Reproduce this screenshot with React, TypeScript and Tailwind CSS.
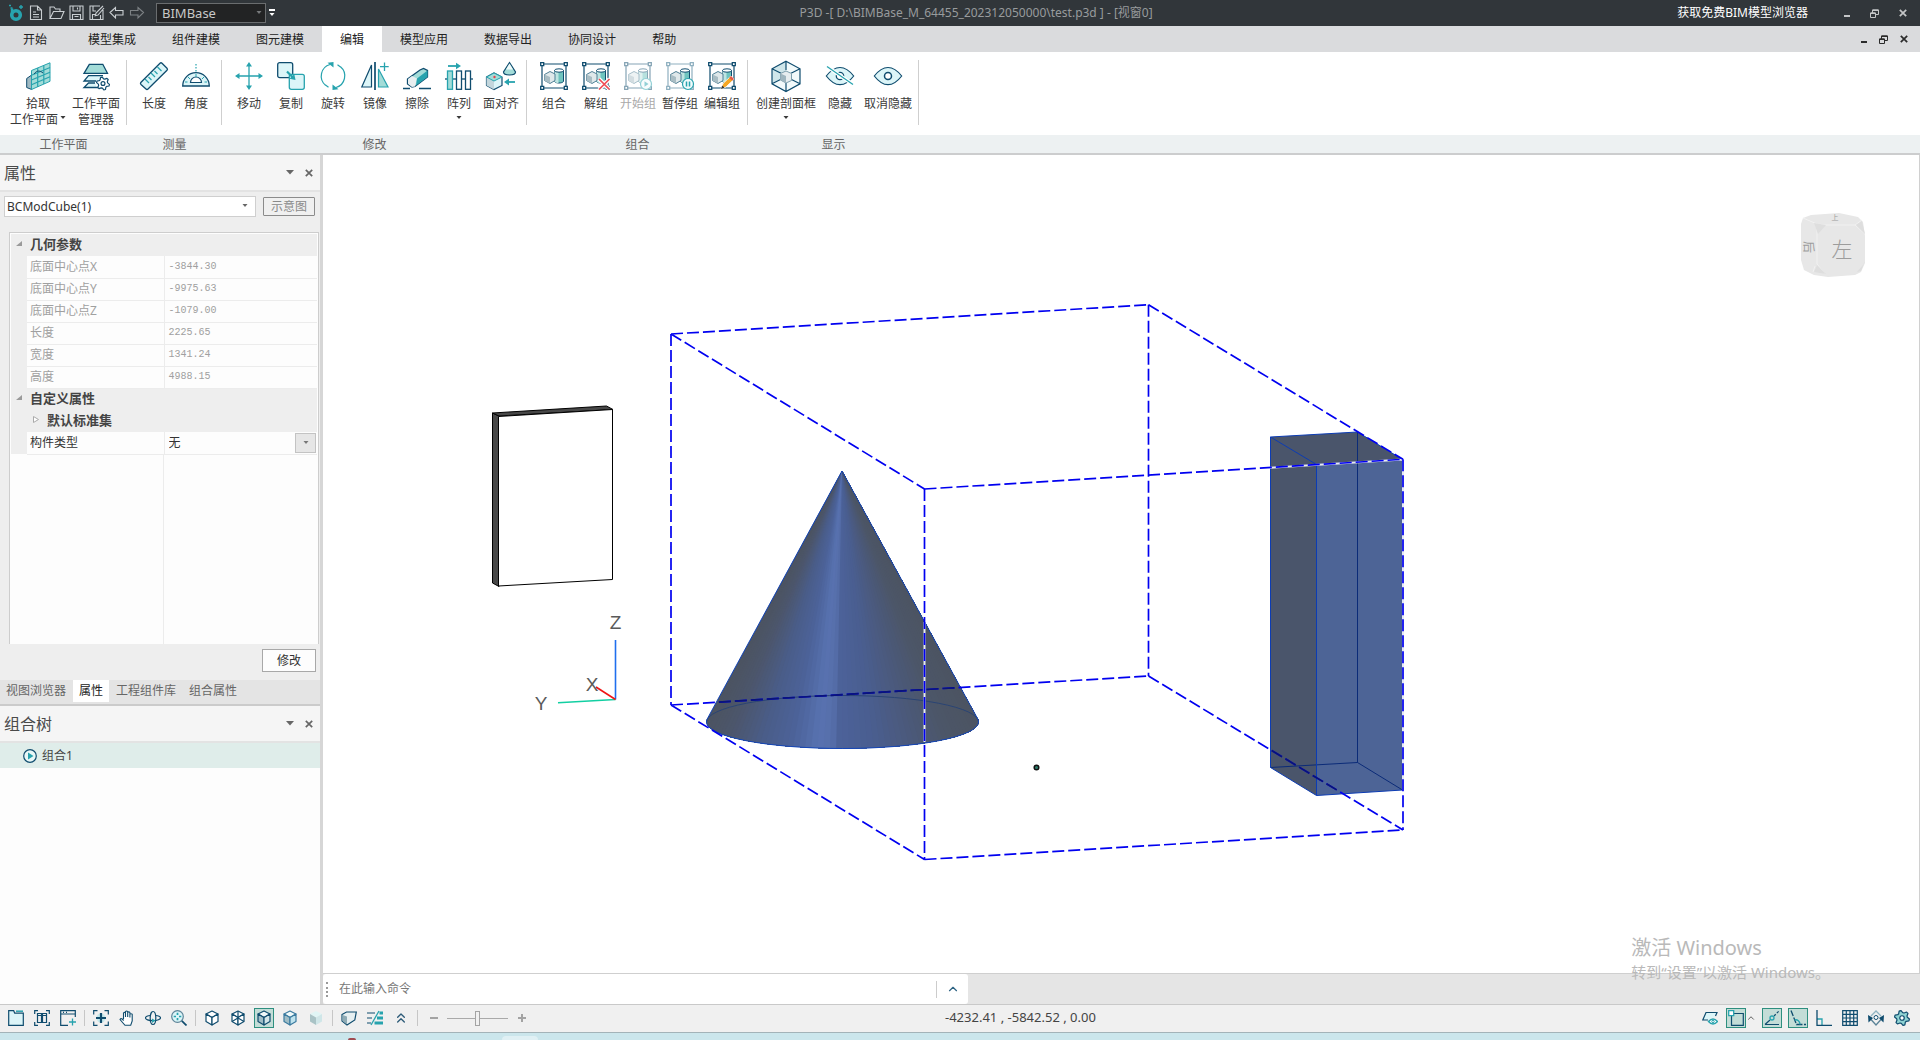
import type { ReactNode } from 'react';
import { LuChevronsUp, LuChevronUp } from 'react-icons/lu';

const NAVY = '#0f4c6e';
const TEAL = '#27a3ae';
const PALE = '#dcf5f8';
const MINT = '#a3dcd8';

/* ---------- shared bits ---------- */

function Caret({ className = '' }: { className?: string }) {
  return (
    <svg viewBox="0 0 6 4" className={`h-1 w-1.5 ${className}`} fill="currentColor">
      <path d="M0.5 0h5L3 3z" />
    </svg>
  );
}

function CloseGlyph() {
  return (
    <svg viewBox="0 0 8 8" className="size-2" stroke="currentColor" strokeWidth="1.7">
      <path d="M.8.8l6.4 6.4M7.2.8L.8 7.2" />
    </svg>
  );
}

function RestoreGlyph() {
  return (
    <svg viewBox="0 0 9 9" className="size-[9px]" fill="none" stroke="currentColor">
      <path d="M.5 4h5v4.5h-5zM2.5 4V1h6v4.5h-3" />
      <path d="M.5 4.3h5M2.5 1.3h6" strokeWidth="1.6" />
    </svg>
  );
}

function WindowButtons({ className, gap }: { className: string; gap: string }) {
  return (
    <div className={`flex items-center ${gap} ${className}`}>
      <button aria-label="最小化" className="flex h-3 w-1.5 items-end pb-0.5">
        <span className="h-0.5 w-full bg-current" />
      </button>
      <button aria-label="还原"><RestoreGlyph /></button>
      <button aria-label="关闭"><CloseGlyph /></button>
    </div>
  );
}

/* ---------- title bar ---------- */

const quickIcons: { name: string; dim?: boolean; d: string }[] = [
  { name: '新建', d: 'M1.5 1h7l4 4v9.5h-11zM8.5 1v4h4M4 7h3M4 9.5h6M4 12h6' },
  { name: '打开', d: 'M1 13.5V2h4l1.5 2H11v2.5M1 13.5l3.5-7H15l-3 7z' },
  { name: '保存', d: 'M1 1h13v13.5H1zM4 1v5h7V1M8.5 2.5v2M3.5 14.5v-5h8v5M5.5 11.5h4' },
  { name: '另存为', d: 'M11 1H1v13.5h13V5M4 1v5h3M3.5 14.5v-5h3M11.5 14.5V10M14 1L7 8l-.8 2.8L9 10l6-7' },
  { name: '撤销', d: 'M1 7.5L6.5 2.5V5.5H14v4.5H6.5v3z' },
  { name: '重做', dim: true, d: 'M14.5 7.5L9 2.5V5.5H1.5v4.5H9v3z' },
];

function TitleBar() {
  return (
    <header className="flex h-[26px] shrink-0 items-center bg-[#31363a] text-xs text-white">
      <svg viewBox="0 0 16 18" className="ml-2 h-[18px] w-4">
        <circle cx="8" cy="11" r="4.3" fill="none" stroke={TEAL} strokeWidth="3.6" />
        <path d="M4 8V4.5" stroke={TEAL} strokeWidth="2.5" />
        <path d="M1 1.5h2M2.5 4h2M13 1v4M11 3h4" stroke={TEAL} strokeWidth="1.4" />
      </svg>
      <div className="ml-[3px] flex">
        {quickIcons.map((q) => (
          <button key={q.name} aria-label={q.name} className="flex w-5 justify-center">
            <svg viewBox="0 0 16 16" className="size-4" fill="none" stroke={q.dim ? '#7d8285' : '#c9ced1'} strokeWidth="1.1">
              <path d={q.d} />
            </svg>
          </button>
        ))}
      </div>
      <div className="relative ml-[9px]">
        <select aria-label="产品" className="h-5 w-[110px] appearance-none border border-[#6a6d6f] bg-[#222324] pl-[5px] text-[13px] leading-4 text-[#c8c8c8]">
          <option>BIMBase</option>
        </select>
        <Caret className="pointer-events-none absolute top-2 right-1 text-[#77797b]" />
      </div>
      <button aria-label="自定义" className="ml-[3px] flex flex-col items-center gap-0.5">
        <span className="h-0.5 w-1.5 bg-white" />
        <Caret />
      </button>
      <h1 className="min-w-0 flex-1 truncate text-center text-[#989b9d]">
        P3D -[ D:\BIMBase_M_64455_202312050000\test.p3d ] - [视窗0]
      </h1>
      <a href="#viewer" className="mr-9">获取免费BIM模型浏览器</a>
      <WindowButtons className="mr-[13px] text-[#c4c6c7]" gap="gap-5" />
    </header>
  );
}

/* ---------- menu ---------- */

const menus = ['模型集成', '组件建模', '图元建模', '编辑', '模型应用', '数据导出', '协同设计', '帮助'];

function MenuBar() {
  return (
    <nav className="flex h-[26px] shrink-0 items-stretch bg-[#dadbdd] text-xs text-[#222]">
      <button className="px-[23px] pt-0.5">开始</button>
      {menus.map((m) => (
        <button key={m} className={`px-[18px] pt-0.5 ${m === '编辑' ? 'bg-white' : ''}`}>{m}</button>
      ))}
      <WindowButtons className="mr-3 ml-auto text-[#2b2b2b]" gap="gap-3" />
    </nav>
  );
}

/* ---------- ribbon icons, all on a 28 grid ---------- */

function Solids() {
  return (
    <g strokeWidth="1">
      <path d="M14.5 8.5v11c1.500 2 7.500 2 9 0v-11z" fill="#6fc4bf" stroke={NAVY} />
      <path d="M14.5 8.5v11c1 1.200 2.500 1.500 4 1.500V8z" fill="#bfe5e2" />
      <ellipse cx="19" cy="8.5" rx="4.5" ry="1.7" fill="#fff" stroke={NAVY} />
      <path d="M4.5 12.5L10 9.5l5 2.500v6.500l-5 3-5.500-3z" fill="#dfe8ea" stroke="#4f7f95" />
      <path d="M4.5 12.5l5.500 2.500v6.500l-5.500-3z" fill="#a9bdc4" />
    </g>
  );
}

function Frame({ faded, children }: { faded?: boolean; children?: ReactNode }) {
  const color = faded ? '#8fb0c0' : NAVY;
  return (
    <>
      <path d="M4 2h20M4 26h20M2 4v20M26 4v20" stroke={color} strokeWidth="1.2" />
      <Solids />
      <path d="M.7.7h3v3h-3zM24.3.7h3v3h-3zM.7 24.3h3v3h-3zM24.3 24.3h3v3h-3z" fill="#fff" stroke={color} strokeWidth="1.3" />
      {children}
    </>
  );
}

function Gear({ cx, cy, r, fill }: { cx: number; cy: number; r: number; fill: string }) {
  const pts = Array.from({ length: 24 }, (_, i) => {
    const a = (i / 24) * Math.PI * 2 + Math.PI / 24;
    const rad = i % 4 < 2 ? r : r * 0.72;
    return `${cx + rad * Math.cos(a)},${cy + rad * Math.sin(a)}`;
  }).join(' ');
  return (
    <g fill={fill} stroke={NAVY} strokeWidth="1.2" strokeLinejoin="round">
      <polygon points={pts} />
      <circle cx={cx} cy={cy} r={r * 0.3} fill="#fff" />
    </g>
  );
}

const icons: Record<string, ReactNode> = {
  pick: (
    <>
      <path d="M2.7 16.5l5-3.5v14.5l-5-2z" fill="#9fb9c2" stroke={NAVY} />
      <path d="M7.5 8.5L26 .8v18.500L7.500 27.500z" fill={MINT} stroke={TEAL} />
      <path d="M13.7 6v19M19.8 3.5v18.500M7.500 13.200L26 5.500M7.500 18L26 10.200M7.500 22.700L26 14.800" stroke={TEAL} strokeWidth="1.2" />
      <path d="M10 12c3-4 6-3.500 9-1" stroke={NAVY} />
    </>
  ),
  planes: (
    <>
      <path d="M7.3 2.3h13.500l4.700 9H2z" fill={MINT} stroke={NAVY} strokeWidth="1.3" />
      <path d="M6 14h15l2 3H17l-3 2.500H2zM6 21.500h8v4H2z" fill={PALE} />
      <path d="M21 13.700H6.500L2 19h12M13 21H6.500L2 25.500h14" stroke={NAVY} strokeWidth="1.3" />
      <Gear cx={21} cy={21.5} r={6.5} fill="#fff" />
    </>
  ),
  length: (
    <>
      <path d="M.8 20.500L20 1.200q1-1 2 0l5 5q1 1 0 2L8 27q-1 1-2 0l-5-4.500q-1-1-.2-2z" fill={PALE} stroke={NAVY} strokeWidth="1.3" />
      <path d="M5 17l4 4M8.500 15l3 3M11 11l4 4M14.500 9l3 3M17.500 5l4 4" stroke={TEAL} strokeWidth="1.2" />
    </>
  ),
  angle: (
    <>
      <path d="M.7 24a13.300 13.300 0 0 1 26.600 0z" fill={PALE} stroke={NAVY} strokeWidth="1.3" />
      <path d="M8.500 20.500a5.500 5.500 0 0 1 11 0z" fill="#fff" stroke={NAVY} strokeWidth="1.2" />
      <path d="M14 2v9" stroke={TEAL} strokeWidth="1.2" strokeDasharray="1.5 1.5" />
      <path d="M14 12v3M6 15l2 2M22 15l-2 2M3 20h2.500M22.500 20H25" stroke={TEAL} />
    </>
  ),
  move: (
    <>
      <path d="M14 3v22M3 14h22" stroke={TEAL} strokeWidth="1.3" />
      <path d="M14 0l3 4.500h-6zM14 28l3-4.500h-6zM0 14l4.500-3v6zM28 14l-4.500-3v6z" fill={TEAL} />
    </>
  ),
  copy: (
    <>
      <rect x=".7" y=".7" width="15" height="15" rx="2" fill={PALE} stroke={NAVY} strokeWidth="1.3" />
      <rect x="12.3" y="12.3" width="15" height="15" rx="2" fill={PALE} stroke={TEAL} strokeWidth="1.3" />
      <path d="M10 9.500l6 6" stroke={TEAL} strokeWidth="2.2" />
      <path d="M18.500 18l-6-1.200 4.800-4.800z" fill={TEAL} />
    </>
  ),
  rotate: (
    <>
      <path d="M11 2.500a12 12 0 0 0-4.500 20.700M17 25.500a12 12 0 0 0 4.500-20.700M6.500 23l3 2.200M21.500 5l-3-2.200" stroke={TEAL} strokeWidth="1.2" />
      <path d="M8.500.8l6-.8v5.500zM19.500 27.200l-6 .8v-5.500z" fill={TEAL} />
    </>
  ),
  mirror: (
    <>
      <path d="M10.500 3v22H.8z" fill={PALE} stroke={NAVY} strokeWidth="1.2" />
      <path d="M17.500 7v18H27z" fill={MINT} stroke={TEAL} strokeWidth="1.2" />
      <path d="M14 0v28" stroke={NAVY} strokeWidth="1.7" />
      <path d="M23.500.5v8.500M19 4.700h8.700" stroke={TEAL} strokeWidth="1.3" />
    </>
  ),
  erase: (
    <>
      <path d="M4.500 17L17 8l3.500-1.500 4 2v6.500L12 24.500l-3 .5-4.500-3z" fill={MINT} stroke={NAVY} strokeWidth="1.3" />
      <path d="M5 17l4-3 5 2.500-2 8-3 .5-4-3.200z" fill="#e8eef0" />
      <path d="M14 16.500l10.500-8v6.500L13 23.500z" fill={TEAL} />
      <path d="M0 26.500h7M16 26.500h12" stroke={NAVY} strokeWidth="1.3" />
    </>
  ),
  array: (
    <>
      <path d="M3 4h10" stroke={TEAL} strokeWidth="1.8" />
      <path d="M16 4l-5-3.300v6.600z" fill={TEAL} />
      <path d="M0 17h28" stroke={NAVY} strokeWidth="1.3" />
      <rect x="2.5" y="9" width="5" height="18.3" fill={MINT} stroke={TEAL} strokeWidth="1.3" />
      <rect x="11.5" y="9" width="5" height="18.3" fill="#fff" stroke={NAVY} strokeWidth="1.3" />
      <rect x="20.5" y="9" width="5" height="18.3" fill="#fff" stroke={NAVY} strokeWidth="1.3" />
    </>
  ),
  align: (
    <>
      <path d="M-.5 15l7.500-4 8 4v8.500l-8 4-7.500-4z" fill={PALE} stroke={NAVY} strokeWidth="1.2" />
      <path d="M-.5 15l7.500 4v8.500l-7.500-4z" fill="#c3d6dc" />
      <path d="M-.5 15l7.500-4 8 4-8 4z" fill={MINT} stroke={TEAL} />
      <path d="M22.500.5l6 9.500c0 4-12 4-12 0z" fill={MINT} stroke={NAVY} strokeWidth="1.2" />
      <path d="M22.500 1.500l3.500 6h-7z" fill="#f0fbfb" />
      <circle cx="7.5" cy="15" r="1.2" fill="#e8404a" />
      <path d="M28 20h-8" stroke={TEAL} strokeWidth="1.8" />
      <path d="M17 20l5-3.500v7z" fill={TEAL} />
    </>
  ),
  group: <Frame />,
  ungroup: (
    <Frame>
      <path d="M17 17l10.500 10.500M27.500 17L17 27.500" stroke="#fff" strokeWidth="4" />
      <path d="M17 17l10.500 10.500M27.500 17L17 27.500" stroke="#ee4d55" strokeWidth="1.7" />
    </Frame>
  ),
  start: (
    <Frame>
      <circle cx="22" cy="22" r="5.5" fill="#f2fbfc" stroke={TEAL} strokeWidth="1.2" />
      <path d="M20.500 19.300v5.400l4-2.700z" fill={TEAL} />
    </Frame>
  ),
  pause: (
    <Frame faded>
      <circle cx="22" cy="22" r="5.5" fill="#f2fbfc" stroke={TEAL} strokeWidth="1.2" />
      <path d="M20.500 19.500v5M23.500 19.500v5" stroke={TEAL} strokeWidth="1.5" />
    </Frame>
  ),
  edit: (
    <Frame>
      <path d="M13 27l2-5.500L23 14l3 3-8 8z" fill="#f6a723" stroke="#fff" strokeWidth=".8" />
      <path d="M23 14l3 3-1.800 1.800-3-3z" fill="#e35a4a" />
      <path d="M13 27l1.200-3.500 2.300 2.300z" fill="#333" />
    </Frame>
  ),
  section: (
    <>
      <path d="M14-.7l14 7.500v15L14 29.500 0 21.800v-15z" fill="#f2fafb" />
      <path d="M14-.7v14L0 21.800v-15z" fill="#cfe6ea" />
      <path d="M14-.7l14 7.500v15L14 29.500 0 21.800v-15zM14 0v8M0 6.800l9 4.500M28 6.800l-9 4.500M0 21.800l9-4.500M28 21.800l-9-4.500M14 29v-8" stroke={NAVY} strokeWidth="1.2" />
      <path d="M8.500 11.500L14 9l5.500 2.500v7L14 21l-5.500-3z" fill="#e6edef" stroke="#7e9fad" />
      <path d="M8.500 11.500L14 14v7l-5.500-3z" fill="#9fb6bf" />
    </>
  ),
  hide: (
    <>
      <path d="M.3 14Q7 5.500 14 5.500T27.700 14Q21 22.700 14 22.700T.3 14z" fill={PALE} stroke={NAVY} strokeWidth="1.2" />
      <circle cx="14" cy="14" r="3.7" fill="#fff" stroke={NAVY} strokeWidth="1.3" />
      <path d="M1 4.500l26 18" stroke="#fff" strokeWidth="3.5" />
      <path d="M1 4.500l26 18" stroke={TEAL} strokeWidth="1.3" />
    </>
  ),
  show: (
    <>
      <path d="M.3 14Q7 5.500 14 5.500T27.700 14Q21 22.700 14 22.700T.3 14z" fill={PALE} stroke={NAVY} strokeWidth="1.2" />
      <circle cx="14" cy="14" r="3.5" fill="#fff" stroke={NAVY} strokeWidth="1.5" />
    </>
  ),
};

/* ---------- ribbon ---------- */

interface Tool {
  icon: string;
  label: string;
  second?: string;
  menu?: boolean;
  disabled?: boolean;
  width?: string;
}

const groups: { title: string; tools: Tool[] }[] = [
  {
    title: '工作平面',
    tools: [
      { icon: 'pick', label: '拾取', second: '工作平面', menu: true, width: 'w-16' },
      { icon: 'planes', label: '工作平面', second: '管理器', width: 'w-[52px]' },
    ],
  },
  {
    title: '测量',
    tools: [
      { icon: 'length', label: '长度' },
      { icon: 'angle', label: '角度' },
    ],
  },
  {
    title: '修改',
    tools: [
      { icon: 'move', label: '移动' },
      { icon: 'copy', label: '复制' },
      { icon: 'rotate', label: '旋转' },
      { icon: 'mirror', label: '镜像' },
      { icon: 'erase', label: '擦除' },
      { icon: 'array', label: '阵列', menu: true },
      { icon: 'align', label: '面对齐' },
    ],
  },
  {
    title: '组合',
    tools: [
      { icon: 'group', label: '组合' },
      { icon: 'ungroup', label: '解组' },
      { icon: 'start', label: '开始组', disabled: true },
      { icon: 'pause', label: '暂停组' },
      { icon: 'edit', label: '编辑组' },
    ],
  },
  {
    title: '显示',
    tools: [
      { icon: 'section', label: '创建剖面框', menu: true, width: 'w-16' },
      { icon: 'hide', label: '隐藏', width: 'w-11' },
      { icon: 'show', label: '取消隐藏', width: 'w-[52px]' },
    ],
  },
];

function ToolButton({ icon, label, second, menu, disabled, width = 'w-[42px]' }: Tool) {
  return (
    <button disabled={disabled} className={`flex flex-col items-center pt-2.5 whitespace-nowrap ${width} ${disabled ? 'text-[#a9a9a9]' : ''}`}>
      <svg viewBox="0 0 28 28" className={`size-7 overflow-visible ${disabled ? 'opacity-50' : ''}`} fill="none">
        {icons[icon]}
      </svg>
      <span className="mt-1.5 leading-4">{label}</span>
      {(second || menu) && (
        <span className="flex h-4 items-center gap-0.5 leading-4">
          {second}
          {menu && <Caret className="-mt-1" />}
        </span>
      )}
    </button>
  );
}

function Ribbon() {
  return (
    <div className="flex h-[103px] shrink-0 border-b-2 border-[#cccdce] bg-white text-xs text-[#3a3a3a]">
      {groups.map((g) => (
        <section key={g.title} aria-label={g.title} className="flex flex-col">
          <div className="flex flex-1">
            <div className="flex flex-1 items-start pr-1 pl-1.5">
              {g.tools.map((t) => <ToolButton key={t.icon} {...t} />)}
            </div>
            <div className="mt-2 mb-2.5 w-px bg-[#cfcfcf]" />
          </div>
          <div className="h-[18px] bg-[#edf1f2] text-center leading-5 text-[#666]">{g.title}</div>
        </section>
      ))}
      <div className="flex flex-1 items-end">
        <div className="h-[18px] flex-1 bg-[#edf1f2]" />
      </div>
    </div>
  );
}

/* ---------- left dock ---------- */

const geometry: [string, string][] = [
  ['底面中心点X', '-3844.30'],
  ['底面中心点Y', '-9975.63'],
  ['底面中心点Z', '-1079.00'],
  ['长度', '2225.65'],
  ['宽度', '1341.24'],
  ['高度', '4988.15'],
];

function PanelHeader({ title }: { title: string }) {
  return (
    <div className="flex h-[37px] shrink-0 items-center border-b-2 border-[#e3e3e3] bg-[#f5f5f5] pr-[7px] pl-1 text-[#4a4a4a]">
      <h2 className="flex-1 text-base">{title}</h2>
      <button aria-label="面板菜单" className="mr-[11px] text-[#666]">
        <svg viewBox="0 0 8 5" className="h-[5px] w-2" fill="currentColor"><path d="M0 0h8L4 4.5z" /></svg>
      </button>
      <button aria-label="关闭面板" className="text-[#666]"><CloseGlyph /></button>
    </div>
  );
}

function SectionRow({ title, nested }: { title: string; nested?: boolean }) {
  return (
    <tr className="h-[22px] bg-[#eeeeee]">
      <th colSpan={3} className="px-0 pt-0 pb-[3px] text-left text-[13px] font-bold text-[#444]">
        <span className={`flex items-center ${nested ? 'gap-2 pl-[22px]' : 'gap-2 pl-[5px]'}`}>
          <svg viewBox="0 0 6 7" className="h-[7px] w-1.5">
            {nested
              ? <path d="M.5.5v6l5-3z" fill="#fff" stroke="#aaa" />
              : <path d="M6 1v5H0z" fill="#9a9a9a" />}
          </svg>
          {title}
        </span>
      </th>
    </tr>
  );
}

function PropertyGrid() {
  return (
    <div className="mr-px ml-[9px] flex flex-1 flex-col border border-b-0 border-[#cdcdcd] bg-[#fdfdfd] p-px pb-0">
      <table className="w-full table-fixed border-collapse text-xs leading-4">
        <colgroup>
          <col className="w-4" />
          <col className="w-[137px]" />
          <col />
        </colgroup>
        <tbody>
          <SectionRow title="几何参数" />
          {geometry.map(([name, value]) => (
            <tr key={name} className="h-[22px] text-[#a0a0a0]">
              <td className="bg-[#eeeeee] p-0" />
              <td className="border-r border-b border-[#ececec] py-0 pr-0 pl-[3px]">{name}</td>
              <td className="border-b border-[#ececec] py-0 pr-0 pl-1 font-['Liberation_Mono',monospace] text-[10px]">{value}</td>
            </tr>
          ))}
          <SectionRow title="自定义属性" />
          <SectionRow title="默认标准集" nested />
          <tr className="h-[22px] text-[#333]">
            <td className="bg-[#eeeeee] p-0" />
            <td className="border-r border-b border-[#ececec] py-0 pr-0 pl-[3px]"><label htmlFor="kind">构件类型</label></td>
            <td className="border-b border-[#ececec] p-0">
              <div className="relative flex">
                <select id="kind" className="h-5 flex-1 appearance-none pl-1">
                  <option>无</option>
                </select>
                <span className="pointer-events-none absolute top-0 right-px flex h-5 w-[21px] items-center justify-center border border-[#c3c3c3] bg-[#e6e6e6] text-[#777]">
                  <Caret />
                </span>
              </div>
            </td>
          </tr>
        </tbody>
      </table>
      <div className="flex flex-1">
        <div className="w-[153px] border-r border-[#ececec]" />
      </div>
    </div>
  );
}

const dockTabs = ['视图浏览器', '属性', '工程组件库', '组合属性'];

function LeftDock() {
  return (
    <aside className="flex w-[323px] shrink-0 flex-col border-r-3 border-[#d6d6d6] bg-[#eeeeee] text-xs">
      <PanelHeader title="属性" />
      <div className="flex items-center gap-[7px] pt-1 pr-[5px] pl-1">
        <div className="relative flex-1">
          <select aria-label="对象" className="h-[21px] w-full appearance-none border border-[#cfcfcf] bg-white pl-0.5 text-xs text-[#333]">
            <option>BCModCube(1)</option>
          </select>
          <Caret className="pointer-events-none absolute top-2 right-2 text-[#666]" />
        </div>
        <button className="h-[19px] w-[52px] rounded-[1px] border border-[#8b8b8b] bg-[#f0f0f0] leading-4 text-[#8a8a8a]">示意图</button>
      </div>
      <div className="flex h-[427px] flex-col pt-[15px]">
        <PropertyGrid />
      </div>
      <div className="flex justify-end py-[5px] pr-1">
        <button className="h-[23px] w-[54px] border border-[#a8a8a8] bg-[#fdfdfd] text-[#333]">修改</button>
      </div>
      <div className="mt-[3px] flex h-[26px] shrink-0 items-start gap-px border-b-2 border-[#cbcbcb] bg-[#e4e4e4] text-[#666]">
        {dockTabs.map((t) => (
          <button key={t} className={`h-[22px] px-1.5 ${t === '属性' ? 'bg-white text-[#222]' : ''}`}>{t}</button>
        ))}
      </div>
      <PanelHeader title="组合树" />
      <div className="flex-1 bg-[#fdfdfd]">
        <button className="flex h-[25px] w-full items-center gap-[5px] bg-[#dfedea] pl-[23px] text-[#444]">
          <svg viewBox="0 0 14 14" className="size-3.5">
            <circle cx="7" cy="7" r="6.3" fill="#e8f7f7" stroke={NAVY} strokeWidth="1.2" />
            <path d="M5 3.500v7L10.500 7z" fill={TEAL} />
          </svg>
          组合1
        </button>
      </div>
    </aside>
  );
}

/* ---------- 3D viewport ---------- */

// shade of the cone side from left (0) to right (1)
const coneStops: [number, number[]][] = [
  [0, [76, 84, 98]],
  [0.08, [76, 86, 108]],
  [0.2, [74, 93, 138]],
  [0.3, [76, 98, 152]],
  [0.34, [80, 104, 162]],
  [0.4, [88, 114, 176]],
  [0.45, [86, 110, 170]],
  [0.47, [76, 98, 154]],
  [0.6, [74, 94, 144]],
  [0.75, [75, 89, 122]],
  [0.88, [76, 86, 104]],
  [1, [76, 84, 98]],
];

function shade(t: number) {
  const i = Math.max(1, coneStops.findIndex(([s]) => s >= t));
  const [t0, a] = coneStops[i - 1];
  const [t1, b] = coneStops[i];
  const k = (t - t0) / (t1 - t0);
  return `rgb(${a.map((v, n) => Math.round(v + (b[n] - v) * k)).join(',')})`;
}

function Cone() {
  const cx = 842.5, cy = 722, rx = 136, ry = 26.5;
  const n = 72;
  const start = Math.PI + 0.1;
  const sweep = Math.PI + 0.2;
  const rim = Array.from({ length: n + 1 }, (_, i) => {
    const a = start - (i / n) * sweep;
    return [cx + rx * Math.cos(a), cy + ry * Math.sin(a)];
  });
  return (
    <g>
      {/* every slice runs on to the right edge, the next one paints over it */}
      {rim.slice(0, n).map(([x], i) => (
        <polygon
          key={i}
          points={`842,471 ${rim.slice(i).map((p) => p.join(',')).join(' ')}`}
          fill={shade(Math.min(1, Math.max(0, (x - cx + rx) / (2 * rx))))}
        />
      ))}
      <path d="M706.5 722a136 26.5 0 0 1 272 0" stroke="#2a4474" />
      <path d="M842 471L707.200 719q-.9 1.500-.7 3a136 26.500 0 0 0 272 0q.2-1.500-.7-3z" stroke="#1446b8" />
    </g>
  );
}

function Viewport() {
  return (
    <svg viewBox="323 155 1596 818" className="absolute inset-0 h-full w-full" fill="none">
      {/* slab */}
      <g stroke="#000" strokeLinejoin="round">
        <path d="M492.500 413L499 416V586.500l-6.500-3.500z" fill="#484848" />
        <path d="M492.500 413L606.500 406l6.500 3.500-114 6.500z" fill="#484848" />
        <path d="M498.500 416.500L612.500 409.500V579.500L498.500 586z" fill="#fff" />
      </g>

      <Cone />

      {/* column */}
      <path d="M1270.500 437L1357.500 432 1402.500 459.500 1316.500 464.500V795.500L1270.500 767.500z" fill="#4a556b" />
      <path d="M1316.500 464.500L1402.500 459.500V790L1316.500 795.500z" fill="#4d6496" />
      <path d="M1357.500 432V762.500L1402.500 790M1357.500 762.500L1270.500 767.500" stroke="#0b2b78" />
      <path d="M1270.500 437L1357.500 432 1402.500 459.500V790L1316.500 795.500 1270.500 767.500zM1270.500 437L1316.500 464.500V795.500M1316.500 464.500L1402.500 459.500" stroke="#0c3cb4" />

      {/* selection box, pale underlay where it crosses in front of a solid */}
      <path d="M924.500 622V742M1270 467.700L1403 459.500M1403 459.500V790" stroke="#e6e9f5" strokeWidth="2" />
      <g stroke="#0000f0" strokeWidth="1.7" strokeDasharray="12 4">
        <path d="M671 334L1148.500 304.700M1148.500 304.700L1403 459.300M671 334L924.500 489M924.500 489L1403 459.300" />
        <path d="M671 334V705M1148.500 304.700V676M924.500 489V859.500M1403 459.300V830" />
        <path d="M671 705L1148.500 676M1148.500 676L1403 830M671 705L924.500 859.500M924.500 859.500L1403 830" />
      </g>
      {/* rear edges seen through the solids */}
      <g stroke="#0a1478" strokeWidth="1.700">
        <path d="M671 705L1148.500 676" strokeDasharray="0 48 12 4 12 4 12 4 12 4 12 4 12 4 12 4 12 4 12 4 12 4 12 4 12 4 12 4 12 4 12 600" />
        <path d="M1148.500 676L1403 830" strokeDasharray="0 144 12 4 12 4 12 4 12 4 12 600" />
      </g>

      {/* axes */}
      <g strokeWidth="1.6">
        <path d="M615.500 699.500V640" stroke="#1f6fee" />
        <path d="M615.500 699.500L558 702.700" stroke="#12cfa2" />
        <path d="M615.500 699.500L596 687" stroke="#f01414" />
      </g>
      <g fill="#5a5a5a" fontSize="19" textAnchor="middle" fontFamily="'Liberation Sans', sans-serif">
        <text x="615.5" y="629">Z</text>
        <text x="592" y="691">X</text>
        <text x="541" y="710">Y</text>
      </g>

      <circle cx="1036.5" cy="767.5" r="2.3" fill="#2d7a6a" stroke="#111" strokeWidth="1.5" />

      {/* view cube */}
      <path d="M1803 218l8-3 28-2 19 4 5 5 2 14v27l-4 9-6 3-27 2-14-2-10-5-3-10v-36z" fill="#e7e7e7" />
      <path d="M1803 218l14 6 9 1h29l7-5M1817 224v40l8 10M1855 225l10 9M1815 266l-2 6" stroke="#f1f1f1" />
      <path d="M1814 223l12 2-8 9zM1856 225l6-4 3 13zM1817 265l9 9-12-2zM1857 272l6-7 2-4-4 10z" fill="#dedede" />
      <g fill="#9c9c9c" fontFamily="'Noto Sans CJK SC', sans-serif" textAnchor="middle">
        <text x="1842" y="257" fontSize="21" fontWeight="300">左</text>
        <text transform="translate(1804 247) rotate(90)" fontSize="12">后</text>
        <text x="1835" y="220" fontSize="7">上</text>
      </g>
    </svg>
  );
}

function CommandLine() {
  return (
    <div className="flex h-[31px] shrink-0 border-t border-[#cfcfcf] bg-[#e5e5e5] text-xs">
      <div className="flex w-[645px] items-center rounded-[3px] bg-white">
        <span className="ml-[3px] h-[15px] border-l-2 border-dotted border-[#999]" />
        <input aria-label="命令" placeholder="在此输入命令" className="ml-[11px] min-w-0 flex-1 outline-none placeholder:text-[#777]" />
        <span className="h-[17px] w-px bg-[#ccc]" />
        <button aria-label="展开" className="flex w-[31px] justify-center text-[#2d6383]">
          <LuChevronUp className="size-3.5" />
        </button>
      </div>
    </div>
  );
}

/* ---------- status bar ---------- */

function StatusCube({ line, faces, wire }: { line: string; faces?: [string, string, string]; wire?: boolean }) {
  return (
    <g stroke={line} strokeWidth="1.2" strokeLinejoin="round">
      <path d="M8 1l6 3-6 3.500L2 4z" fill={faces ? faces[0] : '#fff'} />
      <path d="M2 4l6 3.500V15l-6-3.500z" fill={faces ? faces[1] : '#fff'} />
      <path d="M14 4L8 7.500V15l6-3.500z" fill={faces ? faces[2] : '#fff'} />
      {wire && <path d="M8 1v7.500M2 11.500l6-3.500 6 3.500" />}
    </g>
  );
}

interface StatusTool {
  name: string;
  active?: boolean;
  icon: ReactNode;
}

const leftTools: StatusTool[][] = [
  [
    {
      name: '视图',
      icon: (
        <>
          <path d="M.7 15.300V.7h5l1 2.500h8.600v12.100z" fill={PALE} stroke={NAVY} strokeWidth="1.2" />
          <path d="M8 1.200h7" stroke={TEAL} strokeWidth="1.5" />
        </>
      ),
    },
    {
      name: '平铺',
      icon: (
        <>
          <path d="M3.500 3.500h4v9h-4zM8.500 3.500h4v9h-4zM3.500 5.500h9" stroke={NAVY} strokeWidth="1.2" />
          <path d="M.7 4V.7H4M12 .7h3.300V4M.7 12v3.300H4M12 15.300h3.300V12" stroke={NAVY} strokeWidth="1.2" />
        </>
      ),
    },
    {
      name: '新窗口',
      icon: (
        <>
          <path d="M15.300 7V.7H.7v14.600H8M.7 4h14.600M3 2.400h1M6 2.400h1" stroke={NAVY} strokeWidth="1.2" />
          <path d="M12.500 8.500v7M9 12h7" stroke={TEAL} strokeWidth="1.3" />
        </>
      ),
    },
  ],
  [
    {
      name: '全图',
      icon: (
        <>
          <path d="M.7 4.500V.7h3.800M11.500.7h3.800v3.800M.7 11.500v3.800h3.800M11.500 15.300h3.800v-3.800" stroke={NAVY} strokeWidth="1.2" />
          <circle cx="8" cy="8" r="4.5" fill="#c6e9ec" />
          <path d="M8 3v10M3 8h10" stroke={NAVY} strokeWidth="2.2" />
        </>
      ),
    },
    {
      name: '平移',
      icon: <path d="M4.500 9V3q1-1.300 2 0V7 1.700q1.100-1.300 2.200 0V7 2.500q1.100-1.200 2.200 0V7.500 4.200q1.100-1 2.300 0V11l-1.500 4.300H6L1 9.500q.8-1.500 2.200-.5l1.500 1.500" fill="#fff" stroke={NAVY} strokeWidth="1.1" />,
    },
    {
      name: '动态观察',
      icon: (
        <>
          <ellipse cx="8" cy="8" rx="2.8" ry="6.5" stroke={NAVY} strokeWidth="1.2" />
          <path d="M10.500 5.500c3 .3 5 1.300 5 2.500s-3 2.700-7.500 2.700S.5 9.300.5 8s2-2.200 5-2.500" stroke={NAVY} strokeWidth="1.2" />
          <path d="M7 8.500l3.500 2-3.500 2.500z" fill={TEAL} />
        </>
      ),
    },
    {
      name: '缩放',
      icon: (
        <>
          <circle cx="6.5" cy="6.5" r="5.8" fill={PALE} stroke="#5d8599" strokeWidth="1.2" />
          <path d="M6.500 2.700v2.300M6.500 8v2.300M2.700 6.500H5M8 6.500h2.300" stroke={TEAL} strokeWidth="1.7" />
          <path d="M10.800 10.800l4.700 4.700" stroke={NAVY} strokeWidth="1.7" />
        </>
      ),
    },
  ],
  [
    { name: '线框', icon: <StatusCube line={NAVY} /> },
    { name: '透视线框', icon: <StatusCube line={NAVY} wire /> },
    { name: '着色带边', active: true, icon: <StatusCube line={NAVY} faces={['#f1fafa', '#9fbdc6', '#d3e6e9']} /> },
    { name: '着色', icon: <StatusCube line="#3b7ba0" faces={['#f1fafa', '#9fbdc6', '#bfe3ee']} /> },
    { name: '真实', icon: <StatusCube line="none" faces={['#e0f5f5', '#a9c3c6', '#cfe6e8']} /> },
  ],
  [
    {
      name: '剖切',
      icon: (
        <>
          <path d="M1 4.500L5.500 2h9.800l-1.500 8L6 15 1 11z" fill="#e6eff1" stroke={NAVY} strokeWidth="1.2" />
          <path d="M1.500 5l4.500 1.500v8L1.500 11z" fill="#8fabb5" />
        </>
      ),
    },
    {
      name: '线型',
      icon: (
        <>
          <path d="M0 3h8M0 8h5M0 13h4" stroke={NAVY} strokeWidth="1.2" />
          <path d="M12 1L4 15" stroke={TEAL} strokeWidth="1.3" />
          <path d="M12.500 3H16M10 8h6M7.500 13H16" stroke={TEAL} strokeWidth="3" />
        </>
      ),
    },
  ],
];

const snapTools: StatusTool[] = [
  {
    name: '最近点',
    active: true,
    icon: (
      <>
        <path d="M1 14.500h14M1 14.500l5-4.500" stroke={NAVY} strokeWidth="1.2" />
        <path d="M10 6l5-5" stroke={NAVY} strokeWidth="1.2" strokeDasharray="2.5 1.5" />
        <circle cx="8" cy="8" r="2" stroke={TEAL} strokeWidth="1.3" />
      </>
    ),
  },
  {
    name: '极轴',
    active: true,
    icon: (
      <>
        <path d="M1 .5l5.500 14H16" stroke={NAVY} strokeWidth="1.3" strokeDasharray="6 1.5" />
        <path d="M4.500 10c3-1 5.500 1.500 5.500 4.500" stroke={TEAL} strokeWidth="1.3" />
      </>
    ),
  },
  {
    name: '正交',
    icon: (
      <>
        <path d="M1 9h5v6" stroke={TEAL} strokeWidth="1.3" />
        <path d="M1 0v15.300h15" stroke={NAVY} strokeWidth="1.3" />
      </>
    ),
  },
  {
    name: '栅格',
    icon: <path d="M.7.7h14.600v14.600H.7zM4.300.7v14.600M8 .7v14.600M11.700.7v14.600M.7 4.300h14.600M.7 8h14.600M.7 11.700h14.600" stroke={NAVY} strokeWidth="1.2" />,
  },
  {
    name: '坐标',
    icon: (
      <>
        <path d="M3 6l5-5 5 5" stroke="#8fb3c1" strokeWidth="1.3" />
        <path d="M3 9.500l5 5.500 5-5.500" stroke="#5a8397" strokeWidth="1.3" />
        <path d="M0 5l5 3-4.500 4.500zM16 5l-5 3 4.500 4.500z" fill={NAVY} />
        <circle cx="8" cy="7.5" r="2" fill="#fff" stroke={NAVY} />
      </>
    ),
  },
  { name: '设置', icon: <Gear cx={8} cy={8} r={7.5} fill="#8fd3d3" /> },
];

function StatusButton({ name, active, icon }: StatusTool) {
  return (
    <span className="flex w-[26px] justify-center">
      <button aria-label={name} className={`flex size-5 items-center justify-center ${active ? 'border border-[#2e8f7f] bg-[#c3ddd7]' : ''}`}>
        <svg viewBox="0 0 16 16" className="size-4 shrink-0" fill="none">{icon}</svg>
      </button>
    </span>
  );
}

function Divider() {
  return <span className="mx-[3px] h-4 w-px bg-[#c6c6c6]" />;
}

function StatusBar() {
  return (
    <footer className="flex h-[29px] shrink-0 items-center border-t border-b border-t-[#c9c9c9] border-b-[#a3b3b8] bg-[#f0f0f0] pr-[5px] pb-px pl-[3px]">
      {leftTools.map((tools, i) => (
        <div key={i} className="flex items-center">
          {i > 0 && <Divider />}
          {tools.map((t) => <StatusButton key={t.name} {...t} />)}
        </div>
      ))}
      <button aria-label="更多" className="flex w-[26px] justify-center text-[#2d5b78]"><LuChevronsUp className="size-4" /></button>
      <Divider />
      <button aria-label="缩小" className="flex w-[26px] justify-center"><span className="h-0.5 w-2 bg-[#a3a3a3]" /></button>
      <input
        type="range"
        aria-label="缩放比例"
        defaultValue={50}
        className="h-4 w-[61px] appearance-none bg-transparent [&::-webkit-slider-runnable-track]:h-px [&::-webkit-slider-runnable-track]:bg-[#a9a9a9] [&::-webkit-slider-thumb]:-mt-[7px] [&::-webkit-slider-thumb]:h-[15px] [&::-webkit-slider-thumb]:w-[5px] [&::-webkit-slider-thumb]:appearance-none [&::-webkit-slider-thumb]:border [&::-webkit-slider-thumb]:border-[#a3a3a3] [&::-webkit-slider-thumb]:bg-[#f0f0f0]"
      />
      <button aria-label="放大" className="flex w-7 justify-center text-[#a3a3a3]">
        <svg viewBox="0 0 8 8" className="size-2" stroke="currentColor" strokeWidth="2"><path d="M4 0v8M0 4h8" /></svg>
      </button>
      <output className="min-w-0 flex-1 pl-[409px] text-[13px] whitespace-nowrap text-[#444]">-4232.41 , -5842.52 , 0.00</output>
      <StatusButton
        name="显示平面"
        icon={
          <>
            <path d="M6 10H.8L4 2.500h11L13.500 6" fill={PALE} stroke={NAVY} strokeWidth="1.2" />
            <path d="M6.500 11.500q4.500-5 9 0-4.500 5-9 0z" fill="#fff" stroke={TEAL} strokeWidth="1.5" />
            <circle cx="11" cy="11.5" r="1.2" stroke={TEAL} />
          </>
        }
      />
      <span className="flex w-9 items-center pl-[3px]">
        <button aria-label="对象捕捉" className="flex size-5 items-center justify-center border border-[#2e8f7f] bg-[#c3ddd7]">
          <svg viewBox="0 0 16 16" className="size-4 shrink-0" fill="none">
            <path d="M6 3.500h9.300v11.800H3.500V6" stroke={NAVY} strokeWidth="1.2" />
            <path d="M.7.7h5v5h-5z" fill="#fff" stroke={TEAL} strokeWidth="1.3" />
          </svg>
        </button>
        <button aria-label="捕捉选项" className="text-[#444]"><LuChevronUp className="size-2.5" /></button>
      </span>
      {snapTools.map((t) => <StatusButton key={t.name} {...t} />)}
    </footer>
  );
}

export default function App() {
  return (
    <div className="flex h-screen min-h-[760px] flex-col overflow-hidden bg-white font-['Noto_Sans','Noto_Sans_CJK_SC',sans-serif]">
      <TitleBar />
      <MenuBar />
      <Ribbon />
      <div className="flex min-h-0 flex-1">
        <LeftDock />
        <main className="relative flex min-w-0 flex-1 flex-col">
          <div className="relative flex-1 border-r border-[#d0d0d0]">
            <Viewport />
          </div>
          <CommandLine />
          <div className="pointer-events-none absolute right-[90px] bottom-[22px] text-[#b9b9b9]">
            <p className="text-xl leading-7">激活 Windows</p>
            <p className="text-[15px] leading-5">转到“设置”以激活 Windows。</p>
          </div>
        </main>
      </div>
      <StatusBar />
      {/* strip of the desktop taskbar */}
      <div className="flex h-[7px] shrink-0 items-end overflow-hidden bg-[#cbe6ec]">
        <span className="ml-[348px] h-0.5 w-2 rounded-t-full bg-[#a04a50]" />
        <span className="ml-[146px] h-1 w-9 rounded-t-sm bg-[#e0f0f4]" />
      </div>
    </div>
  );
}
